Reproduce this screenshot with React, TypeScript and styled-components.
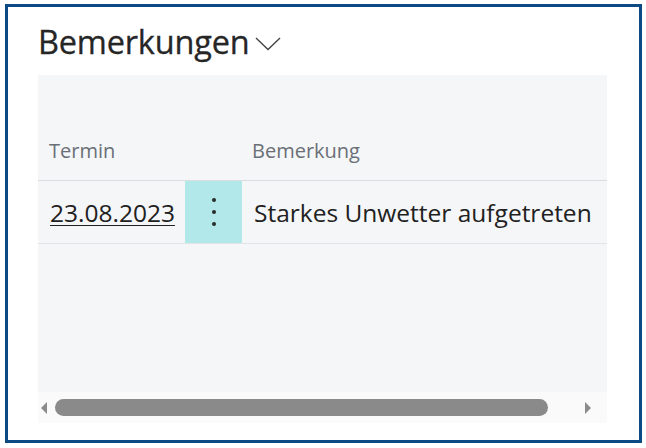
import React from 'react'
import styled, { createGlobalStyle } from 'styled-components'

const GlobalStyle = createGlobalStyle`
  html, body {
    margin: 0;
    padding: 0;
    background: #ffffff;
  }
  body {
    font-family: 'Open Sans', 'Noto Sans', 'Liberation Sans', sans-serif;
    color: #212121;
  }
`

const Page = styled.div`
  width: 646px;
  height: 448px;
  padding: 4px 4px 5px 5px;
  box-sizing: border-box;
`

const Frame = styled.div`
  height: 100%;
  border: 3px solid #0b4a82;
  box-sizing: border-box;
  padding: 0 32px 0 30px;
  display: flex;
  flex-direction: column;
`

const TitleRow = styled.div`
  display: flex;
  align-items: center;
  height: 68px;
  padding-top: 1px;
  box-sizing: border-box;
`

const Title = styled.h2`
  margin: 0;
  font-size: 32.5px;
  font-weight: 400;
  color: #262626;
  letter-spacing: -0.2px;
  -webkit-text-stroke: 0.3px #262626;
`

const Chevron = styled.svg`
  width: 26px;
  height: 14px;
  margin-left: 6px;
  margin-top: 4px;
`

const Panel = styled.div`
  background: #f5f6f8;
  display: flex;
  flex-direction: column;
`

const Table = styled.div`
  display: grid;
  grid-template-columns: 147px 57px 1fr;
  height: 317px;
  align-content: start;
`

const HeadCell = styled.div<{ $pad: number }>`
  height: 106px;
  display: flex;
  align-items: flex-end;
  padding: 0 0 16px ${(p) => p.$pad}px;
  box-sizing: border-box;
  font-size: 20px;
  color: #6a6f76;
  border-bottom: 1px solid #dcdde0;
`

const Cell = styled.div<{ $pad?: number }>`
  height: 63px;
  display: flex;
  align-items: center;
  padding-left: ${(p) => p.$pad ?? 0}px;
  box-sizing: border-box;
  border-bottom: 1px solid #e3e4e7;
  font-size: 24.5px;
  color: #212121;
  white-space: nowrap;
`

const DateLink = styled.a`
  color: #212121;
  text-decoration: underline;
  text-underline-offset: 3px;
  text-decoration-thickness: 1px;
  cursor: pointer;
`

const MenuCell = styled.div`
  height: 63px;
  background: #b2e8ea;
  border-bottom: 1px solid #e3e4e7;
  box-sizing: border-box;
  display: flex;
  align-items: center;
  justify-content: center;
`

const ScrollBar = styled.div`
  height: 31px;
  background: #fafafa;
  display: flex;
  align-items: center;
  padding: 0 16px 0 3px;
  gap: 6px;
`

const Arrow = styled.svg`
  width: 8px;
  height: 12px;
  flex: none;
`

const Track = styled.div`
  flex: 1;
  display: flex;
`

const Thumb = styled.div`
  width: 493px;
  height: 17px;
  border-radius: 9px;
  background: #8a8a8a;
`

export default function App() {
  return (
    <>
      <GlobalStyle />
      <Page>
        <Frame>
          <TitleRow>
            <Title>Bemerkungen</Title>
            <Chevron viewBox="0 0 26 14">
              <path d="M1 1 L13 12.5 L25 1" fill="none" stroke="#444" strokeWidth="1.4" />
            </Chevron>
          </TitleRow>
          <Panel>
            <Table>
              <HeadCell $pad={11}>Termin</HeadCell>
              <HeadCell $pad={0} />
              <HeadCell $pad={10}>Bemerkung</HeadCell>
              <Cell $pad={12}>
                <DateLink>23.08.2023</DateLink>
              </Cell>
              <MenuCell>
                <svg width="6" height="30" viewBox="0 0 6 30">
                  <circle cx="3" cy="3" r="2" fill="#2a2a2a" />
                  <circle cx="3" cy="15" r="2" fill="#2a2a2a" />
                  <circle cx="3" cy="27" r="2" fill="#2a2a2a" />
                </svg>
              </MenuCell>
              <Cell $pad={12}>Starkes Unwetter aufgetreten</Cell>
            </Table>
            <ScrollBar>
              <Arrow viewBox="0 0 8 12">
                <path d="M6 0 L0 6 L6 12 Z" fill="#8a8a8a" />
              </Arrow>
              <Track>
                <Thumb />
              </Track>
              <Arrow viewBox="0 0 8 12">
                <path d="M2 0 L8 6 L2 12 Z" fill="#8a8a8a" />
              </Arrow>
            </ScrollBar>
          </Panel>
        </Frame>
      </Page>
    </>
  )
}
